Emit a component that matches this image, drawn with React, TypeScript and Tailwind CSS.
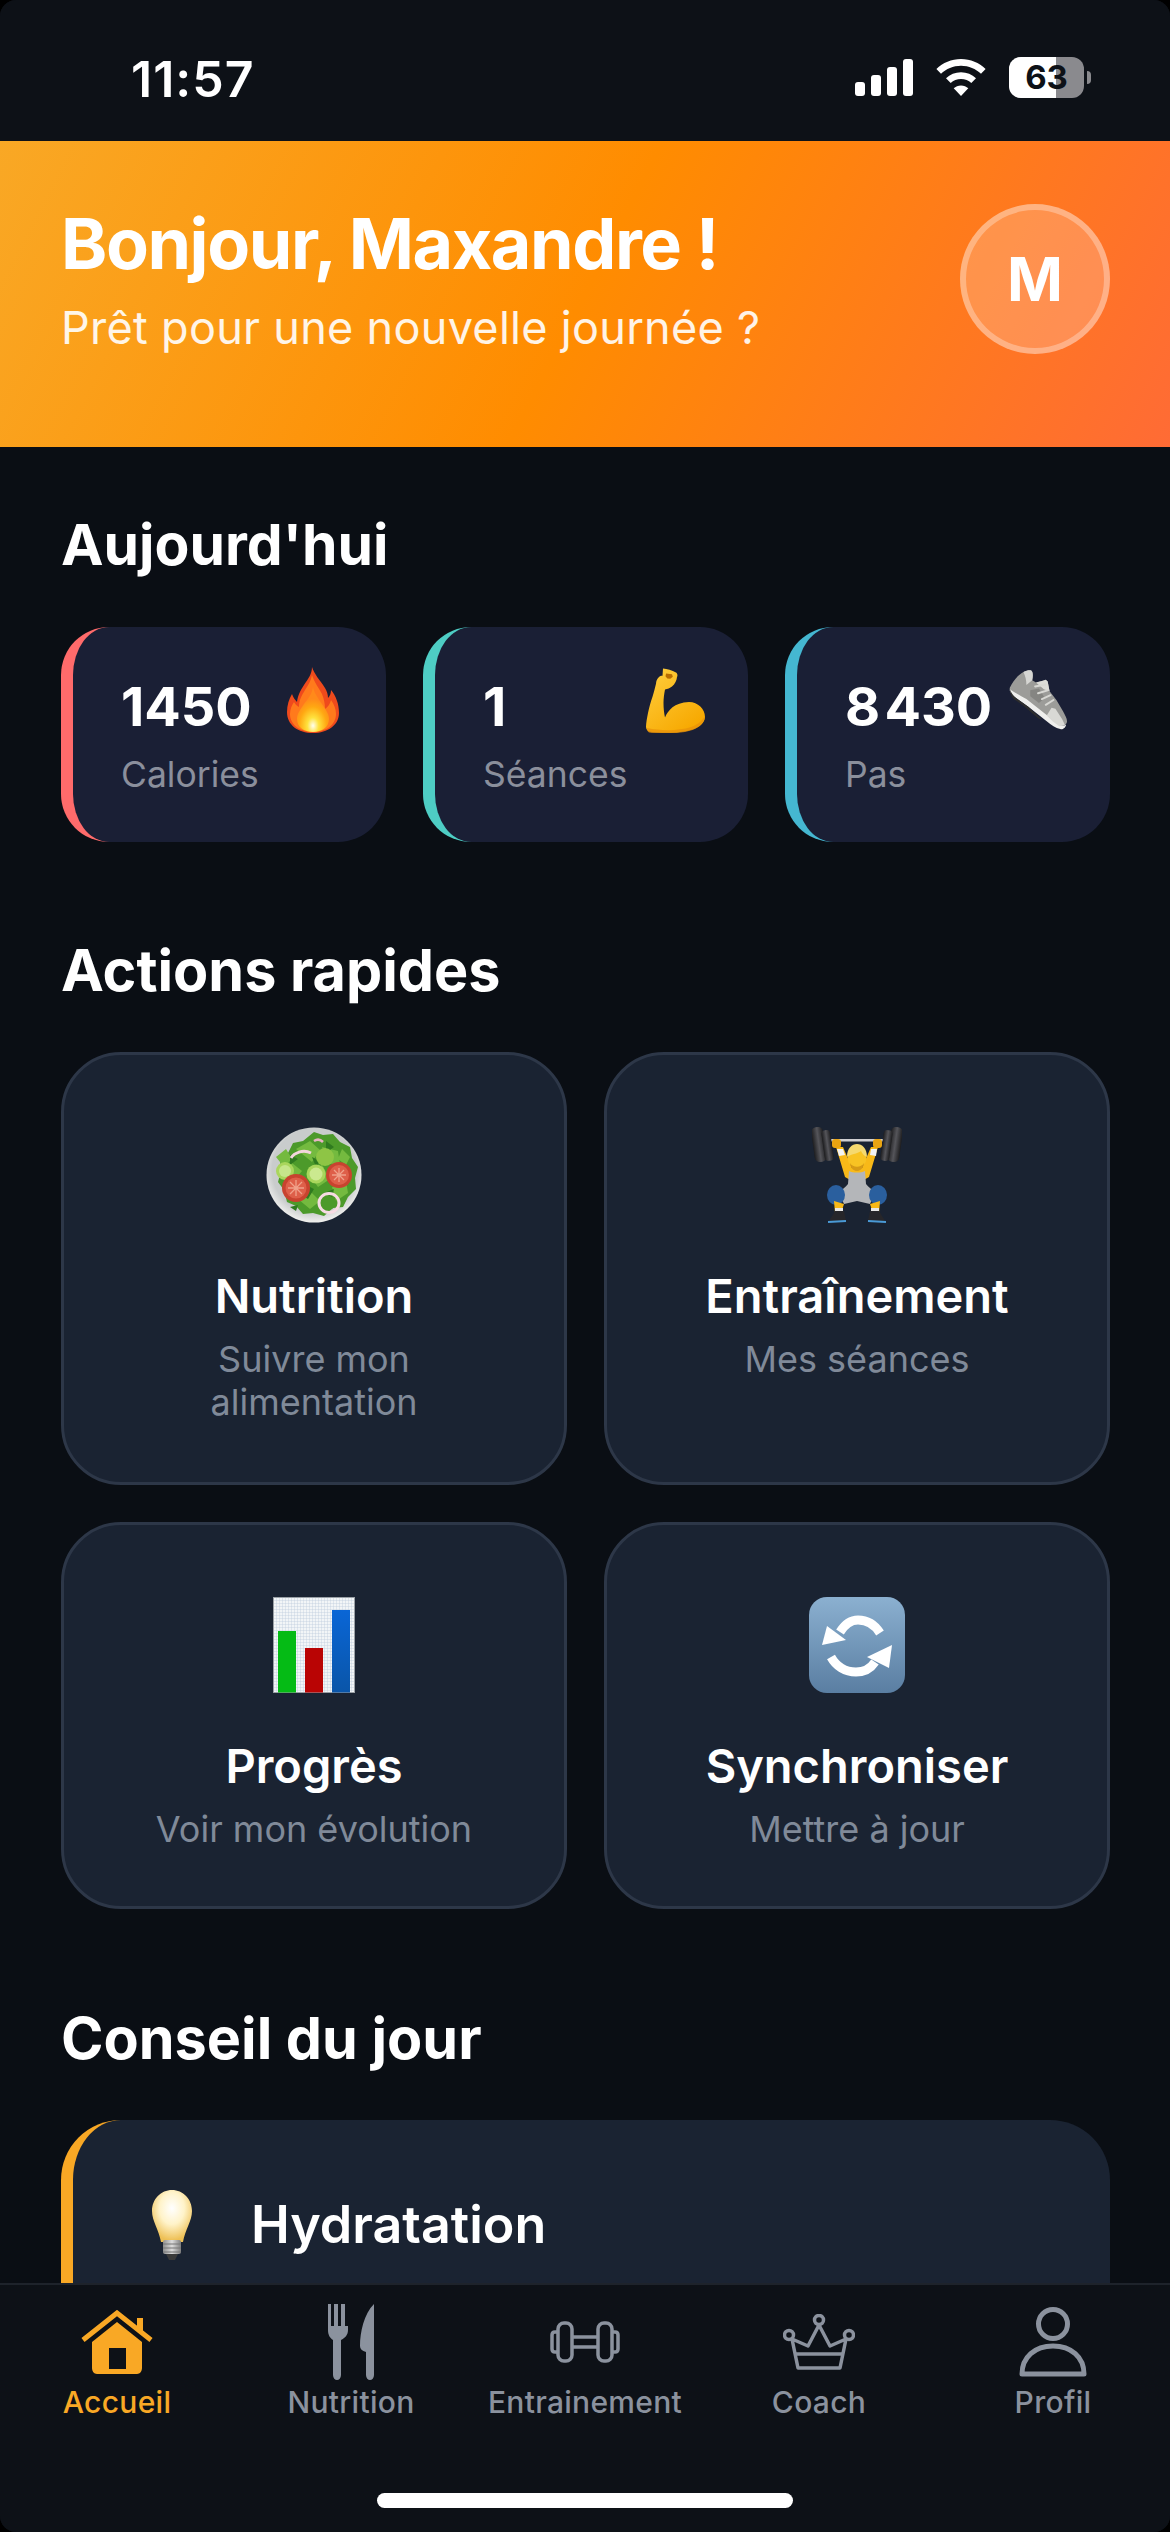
import React from 'react'

function Flame() {
  return (
    <svg viewBox="0 0 52 66" className="mr-[5px] w-[52px] h-[66px]">
      <defs>
        <radialGradient id="fl" cx="50%" cy="86%" r="60%">
          <stop offset="0%" stopColor="#fffef0" />
          <stop offset="30%" stopColor="#ffe23d" />
          <stop offset="70%" stopColor="#ffa812" />
          <stop offset="100%" stopColor="#ff8a1a" />
        </radialGradient>
      </defs>
      <path d="M25 0c2 7 8 13 13 21 2 3 3 7 3 10 2-2 3-5 3-8 5 6 8 14 8 23 0 12-11 20-26 20S0 58 0 45c0-7 2-13 5-18 1 3 3 6 5 8 1-7 3-11 7-17 4-6 8-11 8-18z" fill="#ef4a1c" />
      <path d="M25 8c2 7 7 13 10 19 2 5 3 10 3 15 3-2 5-5 6-9 3 4 5 9 5 14 0 10-9 18-23 18S3 57 3 47c0-5 2-9 4-12 1 2 3 4 5 5 0-7 3-12 6-17 3-5 6-9 7-15z" fill="#ff7a1c" />
      <path d="M26 20c1 6 5 11 9 17 3 5 7 9 7 15 0 8-7 13-16 13S10 60 10 52c0-6 4-10 7-15 4-5 8-10 9-17z" fill="url(#fl)" />
    </svg>
  )
}

function Muscle() {
  return (
    <svg viewBox="16 16 60 66" className="w-[60px] h-[66px]">
      <defs>
        <linearGradient id="mu" x1="0" y1="0" x2=".7" y2="1">
          <stop offset="0%" stopColor="#ffcf3f" />
          <stop offset="100%" stopColor="#f7a800" />
        </linearGradient>
      </defs>
      <path d="M33 17.500c4 .5 9 1.500 13 4 1.500 1 1.800 3 1 4.500-.2 3-2 7-5 9.500-2 1.500-4.500 2.500-7 3-.8 4-1.500 9-1.500 13.500 0 5 .5 10 1.500 14.500 3-7 9-15 24-15.500 9 0 16 7 16 15 0 7-8 12-18 14-14 2.500-26 2-37 .8-2.500-.4-4-2.500-4-5 .5-8 3-20 6.500-30 1.500-5 2.500-9 3.500-13 .2-3 1-5 3-6.800 1-1 2.500-1.500 3.500-1.200z" fill="url(#mu)" />
      <path d="M36 22.500l6 .8 .8 2.500-2.500 2-3-.4-1.800-2.200z" fill="#b96d00" />
      <path d="M17 77c14 3 32 3 44-1 6-2 11-6 14-11-1 9-9 14-20 16-13 2-26 2-35 .8-2-.3-3-2-3-4.800z" fill="#e8920a" opacity=".75" />
    </svg>
  )
}

function Shoe() {
  return (
    <svg viewBox="15 15 62 66" className="w-[60px] h-[66px]">
      <path d="M17 35c3-6 8-13 14-16 3-1.500 6-2 8-1.500 2 1.500 2 6 1 10l4 2.500 7-2 3-1 2 2 2 10 7 9 7 12c2 4 4 7 4 10 0 3-3 5-6 4-5-1-9-4-14-8L38 53 20 42c-2-2-4-5-3-7z" fill="#9c9c99" />
      <path d="M17 37c4 3 10 6 17 10l19 15c6 5 12 10 17 12 2 .5 4 .5 5-1 0 3-3 6-6 5-5-1-9-4-14-8L36 55 22 45c-2-2-6-5-5-8z" fill="#efefed" />
      <path d="M17 37c1 3 3 6 5 8l14 10 14 13c-2 0-4-1-6-3L31 54 21 47c-2-2-4-5-4-10z" fill="#2d2d2d" />
      <path d="M31 19c3-1.500 6-2 8-1.500 2 1.500 2 6 1 10l-6 5c0-5-1-9-3-13.500z" fill="#d6d6d3" />
      <path d="M44 30l7-2 3-1 2 2 2 10-6-2z" fill="#dcdcd8" />
      <path d="M38 38l9-2 6 10-6 5-9-7z" fill="#7f7f7c" opacity=".8" />
      <path d="M43 34l11-2M46 41l10-3M50 47l9-4M54 53l8-5" stroke="#d8d8d4" strokeWidth="2" strokeLinecap="round" />
      <path d="M60 56l4 1 7 11c1 2 2 4 3 6l-6 1-7-5-6-6z" fill="#d9d9d5" />
    </svg>
  )
}

function Salad() {
  return (
    <svg viewBox="0 0 96 96" className="w-[96px] h-[96px]">
      <defs>
        <radialGradient id="pl" cx="50%" cy="45%" r="55%">
          <stop offset="80%" stopColor="#c9cccc" />
          <stop offset="100%" stopColor="#f0f0ee" />
        </radialGradient>
      </defs>
      <circle cx="48" cy="48" r="47.500" fill="url(#pl)" />
      <path d="M48 5l9 3 10-1 7 8 10 5 2 11 6 9-3 11 1 11-8 8-5 10-10 1-9 8-11-3-10 1-7-8-9-4-3-12-6-8 3-11-1-11 8-7 5-10 10-2z" fill="#4c9a2a" />
      <path d="M30 22l14-8 10 9-8 12zM56 20l16 4 2 14-14-2zM14 44l12-8 10 8-10 12zM42 46l14-8 8 14-12 8zM66 60l14-6 2 12-12 8zM32 72l12-8 10 10-10 8zM10 30l10-8 6 10-8 8zM76 22l8 8-4 8-8-6z" fill="#74ba3f" />
      <path d="M36 56l12 6-6 10-10-6zM60 14l8 6-8 6zM24 28l8 4-8 6zM46 30l8 4-4 6zM58 66l10-4-2 8zM24 80l8-2-2 6z" fill="#2f7a1f" />
      <path d="M25 31c3-5 12-9 20-5" fill="none" stroke="#f2d5dc" strokeWidth="3" />
      <path d="M48 14c3-2 6-2 9 1" fill="none" stroke="#e8b3c4" strokeWidth="2.500" />
      <circle cx="19" cy="44" r="9" fill="#a9d65c" />
      <circle cx="19" cy="44" r="6" fill="#c6e68b" />
      <circle cx="50" cy="47" r="9.500" fill="#a9d65c" />
      <circle cx="50" cy="47" r="6.500" fill="#cbe98f" />
      <circle cx="59" cy="30" r="9" fill="#8ec545" />
      <circle cx="30" cy="61" r="14" fill="#c8432f" />
      <circle cx="30" cy="61" r="10.500" fill="#de5f49" />
      <path d="M30 53v16M22 61h16M24 55l12 12M36 55L24 67" stroke="#f0a18a" strokeWidth="1.300" />
      <circle cx="73" cy="48" r="13" fill="#c8432f" />
      <circle cx="73" cy="48" r="10" fill="#de5f49" />
      <path d="M73 41v14M66 48h14M68 43l10 10M78 43L68 53" stroke="#f0a18a" strokeWidth="1.300" />
      <ellipse cx="63" cy="76" rx="10" ry="9.500" fill="none" stroke="#f7dbe3" strokeWidth="3" />
      <ellipse cx="63" cy="76" rx="7" ry="6.500" fill="#4c9a2a" />
    </svg>
  )
}

function Lifter() {
  return (
    <svg viewBox="0 0 90 96" className="w-[90px] h-[96px]">
      <defs>
        <linearGradient id="wt" x1="0" y1="0" x2="1" y2="0">
          <stop offset="0%" stopColor="#1d1d1f" />
          <stop offset="50%" stopColor="#55555a" />
          <stop offset="100%" stopColor="#1d1d1f" />
        </linearGradient>
      </defs>
      <rect x="18" y="12" width="54" height="2.500" rx="1" fill="#cfcfd2" />
      <rect x="1" y="0" width="12" height="35" rx="5" transform="rotate(-8 7 18)" fill="url(#wt)" />
      <rect x="11" y="3" width="9" height="31" rx="4" transform="rotate(-8 15 18)" fill="url(#wt)" />
      <rect x="77" y="0" width="12" height="35" rx="5" transform="rotate(8 83 18)" fill="url(#wt)" />
      <rect x="70" y="3" width="9" height="31" rx="4" transform="rotate(8 74 18)" fill="url(#wt)" />
      <path d="M24 20h7l9 21h10l9-21h7l-9 30-7 4H40l-7-4z" fill="#f8b918" />
      <path d="M25 22h6l2 6-6 1zM59 22h6l-1 7-6-1z" fill="#f2f3f4" />
      <rect x="20" y="12" width="9" height="9" rx="3" fill="#eaa411" />
      <rect x="61" y="12" width="9" height="9" rx="3" fill="#eaa411" />
      <path d="M37 44c4 2 12 2 16 0l1 13c2 3 7 6 9 9l-5 11-13-3-13 3-5-11c2-3 7-6 9-9z" fill="#b4b6b9" />
      <circle cx="45" cy="31" r="9.500" fill="#f8c323" />
      <path d="M35 30c0-9 5-13 10-13s10 4 10 13c-3-1-5-4-6-6-4 3-10 3-14 6z" fill="#f5d96f" />
      <path d="M38 36c3 5 11 5 14 0-1 6-4 8-7 8s-6-2-7-8z" fill="#d79b16" />
      <ellipse cx="24" cy="68" rx="9" ry="10" fill="#2a5f9e" />
      <ellipse cx="66" cy="68" rx="9" ry="10" fill="#2a5f9e" />
      <path d="M22 74l10 3-3 9h-6zM68 74l-10 3 3 9h6z" fill="#f8b918" />
      <path d="M23 81h8v3h-8zM59 81h8v3h-8z" fill="#e8e8e8" />
      <path d="M17 94l6-10h9l2 10zM73 94l-6-10h-9l-2 10z" fill="#26262a" />
      <path d="M16 95l18-1M74 95l-18-1" stroke="#4a9ad6" strokeWidth="2" />
    </svg>
  )
}

function BarChart() {
  return (
    <svg viewBox="0 0 82 96" className="w-[82px] h-[96px]">
      <defs>
        <pattern id="gr" width="3" height="3" patternUnits="userSpaceOnUse">
          <rect width="3" height="3" fill="#f2f5f7" />
          <path d="M3 0H0V3" fill="none" stroke="#b8c9d8" strokeWidth=".7" />
        </pattern>
        <linearGradient id="bl" x1="0" y1="0" x2="0" y2="1">
          <stop offset="0%" stopColor="#0a66d6" />
          <stop offset="100%" stopColor="#0a55a8" />
        </linearGradient>
      </defs>
      <rect x=".5" y=".5" width="81" height="95" fill="url(#gr)" stroke="#9aa0a6" />
      <rect x="5" y="34" width="18" height="61.500" fill="#05bb15" />
      <rect x="32" y="51" width="18" height="44.500" fill="#b90404" />
      <rect x="59" y="13" width="18" height="82.500" fill="url(#bl)" />
    </svg>
  )
}

function SyncIcon() {
  return (
    <svg viewBox="0 0 96 96" className="w-[96px] h-[96px]">
      <defs>
        <linearGradient id="sy" x1="0" y1="0" x2="0" y2="1">
          <stop offset="0%" stopColor="#8bb0d0" />
          <stop offset="100%" stopColor="#5a7ea2" />
        </linearGradient>
      </defs>
      <rect width="96" height="96" rx="18" fill="url(#sy)" />
      <path d="M31 35C36 27 42 23 49 23c9 0 17 5 22 13" fill="none" stroke="#fff" strokeWidth="9" />
      <path d="M13 48l5-19 19 14z" fill="#fff" />
      <path d="M22 60c5 9 14 15 25 15 8 0 15-4 19-10" fill="none" stroke="#fff" strokeWidth="9" />
      <path d="M83 48l-3 23-22-11z" fill="#fff" />
    </svg>
  )
}

function Bulb() {
  return (
    <svg viewBox="0 0 42 70" className="w-[42px] h-[70px]">
      <defs>
        <radialGradient id="bu" cx="50%" cy="35%" r="62%">
          <stop offset="0%" stopColor="#ffffff" />
          <stop offset="50%" stopColor="#fff3c9" />
          <stop offset="100%" stopColor="#eec055" />
        </radialGradient>
        <linearGradient id="ba" x1="0" y1="0" x2="1" y2="0">
          <stop offset="0%" stopColor="#8f8f8f" />
          <stop offset="50%" stopColor="#dcdcdc" />
          <stop offset="100%" stopColor="#7f7f7f" />
        </linearGradient>
      </defs>
      <path d="M21 0c11 0 20 9 20 21 0 10-7 19-9 31H10C8 40 1 31 1 21 1 9 10 0 21 0z" fill="url(#bu)" />
      <rect x="12" y="50" width="18" height="14" rx="2" fill="url(#ba)" />
      <path d="M12 54h18M12 58h18M12 62h18" stroke="#777" strokeWidth="1" />
      <path d="M15 64h12l-3 6h-6z" fill="#3a3a3a" />
    </svg>
  )
}

function StatusIcons() {
  return (
    <div className="flex items-center gap-[23px]">
      <svg viewBox="0 0 58 37" className="w-[58px] h-[37px]" fill="#fff">
        <rect x="0" y="23" width="10" height="14" rx="3" />
        <rect x="16" y="16" width="10" height="21" rx="3" />
        <rect x="32" y="8" width="10" height="29" rx="3" />
        <rect x="48" y="0" width="10" height="37" rx="3" />
      </svg>
      <svg viewBox="0 0 50 37" className="w-[50px] h-[37px]" fill="#fff">
        <path d="M25 0c9.500 0 18.200 3.800 24.600 9.900L45 14.700C39.800 9.800 32.800 6.700 25 6.700S10.200 9.800 5 14.700L.4 9.900C6.800 3.800 15.500 0 25 0z" />
        <path d="M25 13.300c5.800 0 11 2.200 15 5.900l-4.700 4.800c-2.700-2.500-6.300-4-10.300-4s-7.600 1.500-10.300 4L10 19.200c4-3.700 9.200-5.900 15-5.900z" />
        <path d="M25 26.500c2.800 0 5.400 1.100 7.300 2.800L25 37l-7.300-7.700c1.900-1.700 4.500-2.800 7.300-2.800z" />
      </svg>
      <div className="flex items-center gap-[3px]">
        <div className="relative w-[75px] h-[41px] rounded-[12px] overflow-hidden bg-[#8a8a8e] flex items-center justify-center">
          <div className="absolute left-0 top-0 bottom-0 w-[47px] bg-white" />
          <span className="relative text-[#0d1117] text-[33px] leading-none font-bold">63</span>
        </div>
        <div className="w-[4px] h-[13px] rounded-r-full bg-[#8a8a8e]" />
      </div>
    </div>
  )
}

function StatCard({ value, label, color, children }: { value: string; label: string; color: string; children: React.ReactNode }) {
  return (
    <div className={`rounded-[48px] border-l-[12px] ${color} bg-[#1a1f35] h-[215px] pl-[48px] pr-[42px] pt-[40px]`}>
      <div className="flex items-start justify-between">
        <span className="mt-[8px] text-[54px] leading-[64px] font-bold text-white whitespace-nowrap">{value}</span>
        {children}
      </div>
      <div className="mt-[14px] text-[35.5px] leading-[44px] text-[#8b8f9c]">{label}</div>
    </div>
  )
}

function ActionCard({ title, lines, children }: { title: string; lines: string[]; children: React.ReactNode }) {
  return (
    <div className="flex flex-col items-center rounded-[60px] border-[3px] border-[#2d3748] bg-[#1a2332] pt-[72px]">
      <div className="h-[96px] flex items-center justify-center">{children}</div>
      <div className="mt-[45px] text-[47px] leading-[56px] font-semibold text-white">{title}</div>
      <div className="mt-[14px] text-[36px] leading-[43px] text-[#808a99] text-center">
        {lines.map((l) => (
          <div key={l}>{l}</div>
        ))}
      </div>
    </div>
  )
}

function NavItem({ label, active, children }: { label: string; active?: boolean; children: React.ReactNode }) {
  return (
    <div className="flex flex-col items-center">
      <div className="h-[84px] flex items-center justify-center">{children}</div>
      <span className={`text-[30px] leading-[36px] font-medium tracking-[0.3px] ${active ? 'text-[#f9a825]' : 'text-[#8b929e]'}`}>{label}</span>
    </div>
  )
}

export default function App() {
  return (
    <div className="bg-black">
      <div className="h-[2532px] w-full flex flex-col overflow-hidden rounded-[16px] bg-[#0a0e14] font-['Inter',sans-serif]">
        {/* status bar */}
        <div className="h-[141px] shrink-0 bg-[#0d1117] flex items-start justify-between pl-[131px] pr-[79px] pt-[57px]">
          <span className="text-[50px] leading-[44px] font-semibold tracking-[1px] text-white">11:57</span>
          <StatusIcons />
        </div>

        {/* header */}
        <div className="h-[306px] shrink-0 flex items-center justify-between pl-[61px] pr-[60px] pb-[30px] bg-[linear-gradient(117deg,#f9a825_0%,#ff8c00_50%,#ff6b35_100%)]">
          <div>
            <h1 className="text-[70px] leading-[84px] font-bold tracking-[-1.4px] text-white">Bonjour, Maxandre !</h1>
            <p className="mt-[14px] text-[45px] leading-[56px] tracking-[0.3px] text-white/90">Prêt pour une nouvelle journée ?</p>
          </div>
          <div className="w-[150px] h-[150px] rounded-full border-[6px] border-white/30 bg-white/20 flex items-center justify-center">
            <span className="text-[60px] font-bold text-white">M</span>
          </div>
        </div>

        {/* content */}
        <div className="flex-1 min-h-0 overflow-hidden pl-[61px] pr-[60px] pt-[63px]">
          <h2 className="text-[57px] leading-[70px] font-bold text-white">Aujourd'hui</h2>
          <div className="mt-[47px] grid grid-cols-3 gap-[37px]">
            <StatCard value="1450" label="Calories" color="border-[#ff6b6b]"><Flame /></StatCard>
            <StatCard value="1" label="Séances" color="border-[#4ecdc4]"><Muscle /></StatCard>
            <StatCard value={'8\u200A430'} label="Pas" color="border-[#45b7d1]"><Shoe /></StatCard>
          </div>

          <h2 className="mt-[93px] text-[57.5px] leading-[70px] font-bold text-white">Actions rapides</h2>
          <div className="mt-[47px] grid grid-cols-2 grid-rows-[433px_387px] gap-[37px]">
            <ActionCard title="Nutrition" lines={['Suivre mon', 'alimentation']}><Salad /></ActionCard>
            <ActionCard title="Entraînement" lines={['Mes séances']}><Lifter /></ActionCard>
            <ActionCard title="Progrès" lines={['Voir mon évolution']}><BarChart /></ActionCard>
            <ActionCard title="Synchroniser" lines={['Mettre à jour']}><SyncIcon /></ActionCard>
          </div>

          <h2 className="mt-[94px] text-[57.5px] leading-[70px] font-bold text-white">Conseil du jour</h2>
          <div className="mt-[47px] h-[300px] rounded-t-[60px] border-l-[12px] border-[#f9a825] bg-[#1a2332] pl-[78px] pt-[66px]">
            <div className="flex items-center gap-[58px]">
              <Bulb />
              <span className="text-[52px] font-semibold text-white">Hydratation</span>
            </div>
          </div>
        </div>

        {/* tab bar */}
        <div className="h-[249px] shrink-0 border-t-[2px] border-[#1e232b] bg-[#0d1117]">
          <div className="grid grid-cols-5 pt-[15px]">
            <NavItem label="Accueil" active>
              <svg viewBox="0 0 72 64" className="w-[72px] h-[64px]" fill="#f9a825">
                <path d="M2 30L36 3l34 27" fill="none" stroke="#f9a825" strokeWidth="5" />
                <path d="M56 8h6v18l-6-5z" />
                <path fillRule="evenodd" d="M36 12l25 20v26c0 3-2 6-5 6H16c-3 0-5-3-5-6V32zM28 38v21h17V38z" />
              </svg>
            </NavItem>
            <NavItem label="Nutrition">
              <svg viewBox="0 0 46 76" className="w-[46px] h-[76px]" fill="#8b929e">
                <path d="M0 0h3v22h3V0h4v22h3V0h4v22h3V0h0v26c0 5-3 8-7 10v35c0 3-2 5-4 5s-4-2-4-5V36c-3-2-5-5-5-10z" />
                <path d="M46 0v71c0 3-2 5-4 5s-4-2-4-5V48c-4-1-6-3-6-6 0-14 4-32 14-42z" />
              </svg>
            </NavItem>
            <NavItem label="Entrainement">
              <svg viewBox="0 0 70 42" className="w-[70px] h-[42px]" fill="none" stroke="#8b929e" strokeWidth="3.500">
                <rect x="8" y="2" width="14" height="38" rx="6" />
                <rect x="48" y="2" width="14" height="38" rx="6" />
                <path d="M8 11H5c-2 0-3 1-3 3v14c0 2 1 3 3 3h3M62 11h3c2 0 3 1 3 3v14c0 2-1 3-3 3h-3" />
                <path d="M22 16h26M22 26h26" />
              </svg>
            </NavItem>
            <NavItem label="Coach">
              <svg viewBox="0 0 72 56" className="w-[72px] h-[56px]" fill="none" stroke="#8b929e" strokeWidth="3.500" strokeLinejoin="round">
                <circle cx="36" cy="6" r="4.500" />
                <circle cx="6" cy="21" r="4.500" />
                <circle cx="66" cy="21" r="4.500" />
                <path d="M36 11l-11 21L9 25M36 11l11 21 16-7M9 25l6 29h42l6-29" />
                <path d="M12 40h48" />
              </svg>
            </NavItem>
            <NavItem label="Profil">
              <svg viewBox="0 0 68 70" className="w-[68px] h-[70px]" fill="none" stroke="#8b929e" strokeWidth="5">
                <circle cx="34" cy="17" r="14.500" />
                <path d="M3 67c0-17 13-28 31-28s31 11 31 28z" strokeLinejoin="round" />
              </svg>
            </NavItem>
          </div>
          <div className="flex justify-center pt-[73px]">
            <div className="w-[416px] h-[15px] rounded-full bg-white" />
          </div>
        </div>
      </div>
    </div>
  )
}
